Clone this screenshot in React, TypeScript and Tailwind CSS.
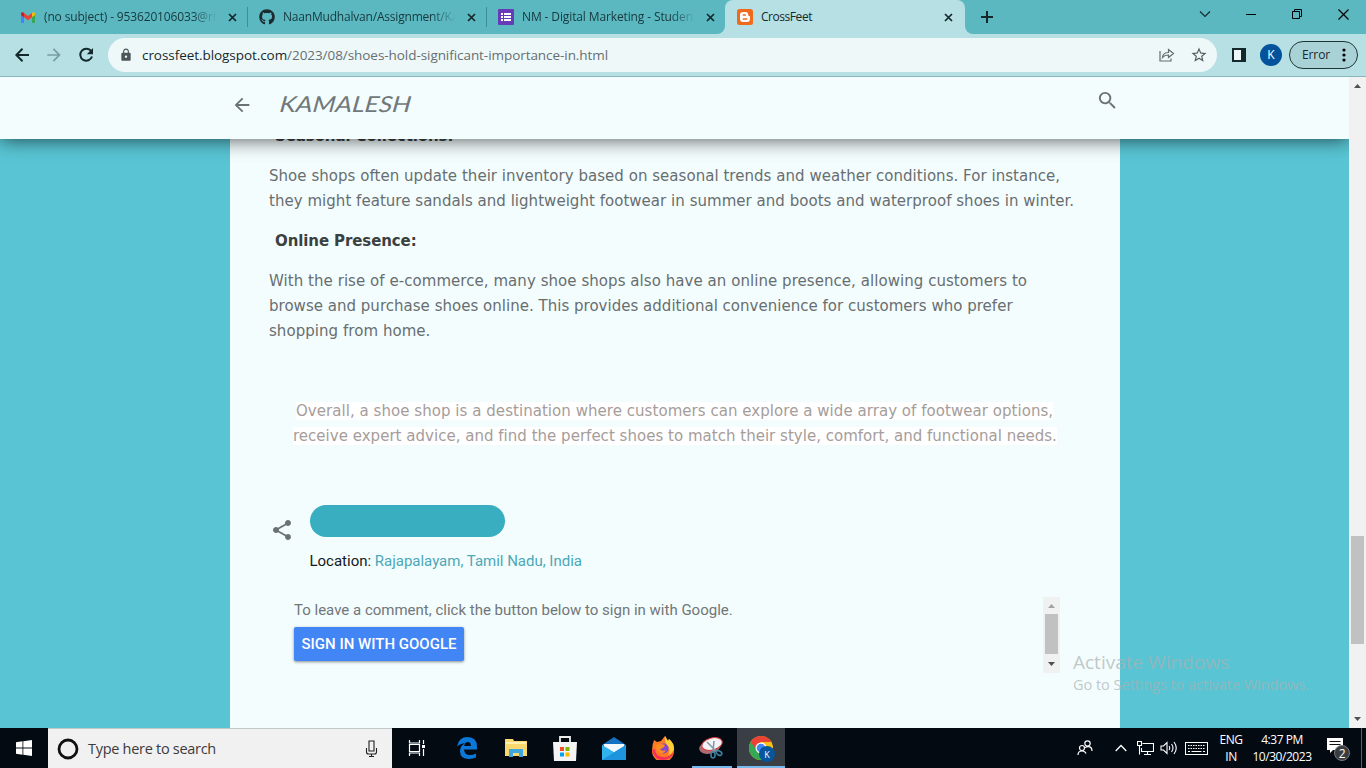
import React from "react";
import { MdArrowBack, MdArrowForward, MdLock, MdStarOutline, MdSearch, MdShare } from "react-icons/md";
import { FaGithub } from "react-icons/fa";

const UI = "font-['Open_Sans','Noto_Sans',sans-serif]";

function Gmail() {
  return (
    <svg width="14" height="11" viewBox="0 0 14 11">
      <path d="M0 1v9q0 1 1 1h2V3z" fill="#4285f4" />
      <path d="M14 1v9q0 1-1 1h-2V3z" fill="#34a853" />
      <path d="M0 1.500V3l3 2.300V1L2 .3Q.3-.2 0 1.500z" fill="#c5221f" />
      <path d="M14 1.500V3l-3 2.300V1l1-.7q1.700-.5 2 1.200z" fill="#fbbc04" />
      <path d="M3 1l4 3 4-3v4.300l-4 3-4-3z" fill="#ea4335" />
    </svg>
  );
}

function FormsIcon() {
  return (
    <svg width="16" height="16" viewBox="0 0 16 16">
      <rect width="16" height="16" rx="1" fill="#673ab7" />
      <path d="M3 4h2v2H3zM3 7h2v2H3zM3 10h2v2H3zM6 4h7v2H6zM6 7h7v2H6zM6 10h7v2H6z" fill="#fff" />
    </svg>
  );
}

function BloggerIcon() {
  return (
    <svg width="16" height="16" viewBox="0 0 16 16">
      <rect width="16" height="16" rx="2.500" fill="#f06a1b" />
      <path d="M6 3h2.500A2.700 2.700 0 0 1 11.200 5.700q0 1.300 1 1.300.8 0 .8.8V10a3 3 0 0 1-3 3H6a3 3 0 0 1-3-3V6a3 3 0 0 1 3-3z" fill="#fff" />
      <path d="M6.200 6h2.200M6.200 10h3.600" stroke="#f06a1b" strokeWidth="1.300" strokeLinecap="round" />
    </svg>
  );
}

function CloseIcon({ className }: { className: string }) {
  return (
    <svg className={`shrink-0 ${className}`} width="9" height="9" viewBox="0 0 9 9">
      <path d="M1 1l7 7M8 1l-7 7" stroke="#14272a" strokeWidth="1.700" />
    </svg>
  );
}

function Tab({ icon, title, width, sep, tracking }: { icon: React.ReactNode; title: string; width: string; sep: boolean; tracking: string }) {
  return (
    <div className={`flex h-[34px] items-center ${width}`}>
      <div className="flex w-[16px] shrink-0 justify-center">{icon}</div>
      <div className={`ml-2 w-[173px] shrink-0 overflow-hidden whitespace-nowrap text-[12px] text-[#16383c] [mask-image:linear-gradient(to_right,black_86%,transparent)] ${tracking}`}>{title}</div>
      <CloseIcon className="ml-[11px]" />
      {sep && <div className="ml-[10px] h-[20px] w-px shrink-0 bg-[#3d8e96]" />}
    </div>
  );
}

function TabStrip() {
  return (
    <div className="flex h-[34px] bg-[#b6e0e3]">
      <div className="flex w-[725px] overflow-hidden rounded-br-[8px] bg-[#5bb8c0] pl-5">
        <Tab icon={<Gmail />} title="(no subject) - 953620106033@rit" width="w-[239px]" sep tracking="tracking-[-0.15px]" />
        <Tab icon={<FaGithub size={16} color="#1c2b30" />} title="NaanMudhalvan/Assignment/Kar" width="w-[239px]" sep tracking="tracking-[-0.2px]" />
        <Tab icon={<FormsIcon />} title="NM - Digital Marketing - Student" width="w-[227px]" sep={false} tracking="tracking-[-0.12px]" />
      </div>
      <div className="w-[240px] bg-[#5bb8c0]">
        <div className="flex h-full items-center rounded-t-[8px] bg-[#b6e0e3] pl-3">
          <BloggerIcon />
          <span className="ml-2 w-[180px] text-[12px] tracking-[-0.45px] text-[#17282b]">CrossFeet</span>
          <CloseIcon className="ml-[3px]" />
        </div>
      </div>
      <div className="flex flex-1 items-center rounded-bl-[8px] bg-[#5bb8c0]">
        <svg className="ml-4" width="12" height="12" viewBox="0 0 12 12"><path d="M6 0v12M0 6h12" stroke="#14272a" strokeWidth="2" /></svg>
        <div className="mb-[6px] ml-auto flex items-center">
          <svg width="12" height="8" viewBox="0 0 12 8"><path d="M1 1.500l5 5 5-5" fill="none" stroke="#17282b" strokeWidth="1.100" /></svg>
          <svg className="ml-[35px]" width="10" height="10" viewBox="0 0 10 10"><path d="M0 5.500h10" stroke="#000" /></svg>
          <svg className="ml-[36px]" width="10" height="10" viewBox="0 0 10 10"><path d="M.5 2.500h7v7h-7zM2.500 2.500v-2h7v7h-2" fill="none" stroke="#000" /></svg>
          <svg className="ml-[36px] mr-[17px]" width="11" height="11" viewBox="0 0 11 11"><path d="M.5.5l10 10M10.500.5l-10 10" stroke="#000" strokeWidth="1.200" /></svg>
        </div>
      </div>
    </div>
  );
}

function Toolbar() {
  return (
    <div className="flex h-[43px] items-center border-b border-[#8ab7bb] bg-[#b6e0e3]">
      <svg className="ml-[15px]" width="14" height="14" viewBox="0 0 14 14"><path d="M14 7H1.500M7.500.8L1.300 7l6.200 6.200" fill="none" stroke="#14272a" strokeWidth="2" /></svg>
      <MdArrowForward size={20} className="ml-[15px] text-[#789da1]" />
      <svg className="ml-[14px]" width="16" height="16" viewBox="0 0 16 16"><path d="M13.200 4.200A6 6 0 1 0 14 9.500" fill="none" stroke="#14272a" strokeWidth="2" /><path d="M15 1v6.200H8.800z" fill="#14272a" /></svg>
      <div className="ml-[14px] flex h-[34px] w-[1109px] items-center rounded-full bg-[#eef8f9] pl-[11px]">
        <MdLock size={14} className="text-[#4c5558]" />
        <div className="ml-[9px] whitespace-nowrap text-[13.500px] tracking-[-0.06px] text-[#666f72]"><span className="text-[#17282b]">crossfeet.blogspot.com</span>/2023/08/shoes-hold-significant-importance-in.html</div>
        <svg className="ml-auto" width="16" height="14" viewBox="0 0 16 14"><path d="M1 3v10h11v-2.500M3.500 9.500Q4 4.500 9.500 4.500V1.500L14.500 5.500 9.500 9.500V7Q5.500 7 3.500 9.500z" fill="none" stroke="#626c6f" strokeWidth="1.200" /></svg>
        <MdStarOutline size={18} className="ml-[15px] mr-[9px] text-[#545e61]" />
      </div>
      <svg className="ml-[15px]" width="14" height="14" viewBox="0 0 14 14"><path d="M1 1h12v12H1z" fill="#eef8f9" stroke="#14272a" strokeWidth="2" /><path d="M9 1h4v12H9z" fill="#14272a" /></svg>
      <div className="ml-[14px] flex h-[22px] w-[22px] items-center justify-center rounded-full bg-[#02539c] text-[12px] text-white">K</div>
      <div className="ml-[7px] flex h-[28px] w-[69px] items-center rounded-full border border-[#1f3437] bg-[#a9d2d6] pl-3 text-[12px] tracking-[-0.1px] text-[#17282b]">
        <span className="w-[26px]">Error</span>
        <svg className="ml-[14px]" width="4" height="14" viewBox="0 0 4 14"><circle cx="2" cy="2" r="1.600" /><circle cx="2" cy="7" r="1.600" /><circle cx="2" cy="12" r="1.600" /></svg>
      </div>
    </div>
  );
}

function PageHeader() {
  return (
    <header className="relative z-10 h-[62px] bg-[#f3fdfe] shadow-[0_0_20px_rgba(0,0,0,0.7)]">
      <div className="flex h-full items-start">
        <MdArrowBack size={22} className="ml-[231px] mt-[17px] text-[#6c7274]" />
        <div className="ml-[27px] mt-[12px] w-[140px] origin-left -skew-x-6 scale-x-[1.2] whitespace-nowrap font-['Lato',sans-serif] text-[22px] italic leading-[30px] text-[#71787a]">KAMALESH</div>
        <MdSearch size={23} className="ml-[676px] mt-[12px] text-[#6c7274]" />
      </div>
    </header>
  );
}

function Line({ children, className }: { children: React.ReactNode; className: string }) {
  return <div className={`h-[25px] whitespace-nowrap leading-[25px] ${className}`}>{children}</div>;
}

function Article() {
  return (
    <main className="ml-[230px] flex h-[589px] w-[890px] flex-col bg-[#f3fdfe] px-[39px]">
      <div className="-mt-[15px] flex flex-col gap-[15px] font-['Verdana','DejaVu_Sans',sans-serif] text-[15px] text-[#686e70]">
        <Line className="pl-1.5 font-bold text-[#3b4041] tracking-[-0.1px]">Seasonal Collections:</Line>
        <div>
          <Line className="tracking-[0.038px]">Shoe shops often update their inventory based on seasonal trends and weather conditions. For instance,</Line>
          <Line className="tracking-[0.034px]">they might feature sandals and lightweight footwear in summer and boots and waterproof shoes in winter.</Line>
        </div>
        <Line className="pl-1.5 font-bold text-[#3b4041] tracking-[-0.1px]">Online Presence:</Line>
        <div>
          <Line className="tracking-[0.052px]">With the rise of e-commerce, many shoe shops also have an online presence, allowing customers to</Line>
          <Line className="tracking-[0.02px]">browse and purchase shoes online. This provides additional convenience for customers who prefer</Line>
          <Line className="tracking-[0.05px]">shopping from home.</Line>
        </div>
        <div className="mt-[40px] text-[#a59d9b]">
          <Line className="pl-[27px] tracking-[0.046px]"><span className="bg-white">Overall, a shoe shop is a destination where customers can explore a wide array of footwear options,</span></Line>
          <Line className="pl-[24px] tracking-[0.02px]"><span className="bg-white">receive expert advice, and find the perfect shoes to match their style, comfort, and functional needs.</span></Line>
        </div>
      </div>
      <div className="mt-[56px] flex font-['Roboto',sans-serif] text-[15px]">
        <MdShare size={24} className="mt-[13px] ml-[1px] text-[#6c7274]" />
        <div className="ml-[16px]">
          <div className="h-[32px] w-[195px] rounded-full bg-[#39aec1]" />
          <div className="-ml-[0.5px] mt-[12px] leading-6 tracking-[-0.01px] text-[#17191a]">Location: <span className="text-[#4ca8b6]">Rajapalayam, Tamil Nadu, India</span></div>
        </div>
      </div>
      <div className="mt-[24px] flex h-[76px] justify-between pl-[25px] pr-[21px] font-['Roboto',sans-serif] text-[15px]">
        <div>
          <div className="h-[30px] leading-[27px] text-[#717678]">To leave a comment, click the button below to sign in with Google.</div>
          <div className="flex h-[34px] w-[170px] items-center justify-center whitespace-nowrap rounded-[2px] bg-[#4285f4] font-medium text-white shadow-[0_1px_3px_rgba(0,0,0,0.45)]">SIGN IN WITH GOOGLE</div>
        </div>
        <div className="flex w-[17px] flex-col items-center justify-between bg-[#f0f1f1]">
          <svg width="17" height="17" viewBox="0 0 17 17"><path d="M5 11l3.500-4 3.500 4z" fill="#a3a3a3" /></svg>
          <div className="mb-[2px] h-[40px] w-[13px] bg-[#c1c1c1]" />
          <svg width="17" height="17" viewBox="0 0 17 17"><path d="M5 6l3.500 4L12 6z" fill="#505050" /></svg>
        </div>
      </div>
    </main>
  );
}

function Taskbar() {
  return (
    <div className="flex h-[40px] bg-[#040a12] text-white">
      <div className="flex w-[48px] items-center justify-center">
        <svg width="16" height="16" viewBox="0 0 16 16"><path d="M0 2.200L6.500 1.300V7.500H0zM7.300 1.200L16 0V7.500H7.300zM0 8.400h6.500v6.300L0 13.800zM7.300 8.400H16V16l-8.700-1.200z" fill="#fff" /></svg>
      </div>
      <div className="flex w-[344px] items-center border-t border-[#bfc9ca] bg-[#f1f1f1]">
        <svg className="ml-[9px]" width="22" height="22" viewBox="0 0 22 22"><circle cx="11" cy="11" r="9" fill="none" stroke="#111" strokeWidth="2.800" /></svg>
        <span className="ml-[9px] w-[277px] whitespace-nowrap text-[14.500px] tracking-[-0.29px] text-[#3b3b3b]">Type here to search</span>
        <svg width="13" height="17" viewBox="0 0 13 17"><path d="M4 1h5v10H4zM1.500 8v4q0 2 2 2h6q2 0 2-2V8M6.500 14v2.500M4 16.500h5" fill="none" stroke="#222" strokeWidth="1.100" /></svg>
      </div>
      <div className="flex flex-1 items-center">
        <svg className="ml-[16px]" width="18" height="18" viewBox="0 0 18 18"><path d="M1.500 1v3h10V1M1.500 17v-3h10v3M1.500 5.500h10v7h-10zM15.500 1v4M15.500 10v7" fill="none" stroke="#fff" strokeWidth="1.200" /><rect x="14" y="6" width="3" height="3" fill="#fff" /></svg>
        <svg className="ml-[31px]" width="20" height="22" viewBox="0 0 20 22"><path d="M0 9.600Q1.500 0 10.500 0 20 0 20 10v2.500H7Q7.500 18 13 18q3 0 6-1.600v4.200Q16 22 12 22 3 22 3 14q0-5.500 5.500-8Q3 6.500 0 9.600zM7.200 9h6.700Q14 5 10.800 5 7.800 5 7.200 9z" fill="#0b78d7" /></svg>
        <svg className="ml-[27px]" width="24" height="20" viewBox="0 0 24 20"><path d="M1 1h8l1 2h13v15H1z" fill="#f9d870" /><path d="M2 4h20v2H2z" fill="#fff0b0" /><path d="M5 19v-8h14v8h-4v-4H9v4z" fill="#41a6dc" /></svg>
        <svg className="ml-[25px]" width="24" height="25" viewBox="0 0 24 25"><path d="M7 7V1h10v6" fill="none" stroke="#eee" strokeWidth="1.800" /><path d="M0 6h24l-1 19H1z" fill="#f4f4f4" /><path d="M7 11h4v4H7z" fill="#f25022" /><path d="M12.500 11h4v4h-4z" fill="#7fba00" /><path d="M7 16.500h4v4H7z" fill="#00a4ef" /><path d="M12.500 16.500h4v4h-4z" fill="#ffb900" /></svg>
        <svg className="ml-[25px]" width="24" height="23" viewBox="0 0 24 23"><path d="M0 8L12 0l12 8v5H0z" fill="#1470c0" /><path d="M2 7h20v9H2z" fill="#f2f8fc" /><path d="M0 8l12 7 12-7v15H0z" fill="#31b3ed" /><path d="M0 23L24 8v15z" fill="#1e94df" /><path d="M1 7.600h22L12 15z" fill="#f2f8fc" /></svg>
        <svg className="ml-[25px]" width="24" height="24" viewBox="0 0 24 24"><path d="M3 4l3 2 4-1 4-5 3 5 1-2q6 5 5 12a11 11 0 0 1-22 0Q1 9 3 4z" fill="#ff7a24" /><path d="M14 0l3 5 1-2q5 4 5 10-2 5-6 6 3-5 0-9-4-4-3-10z" fill="#ffcd36" /><path d="M1 14q2 10 11 10 8 0 11-8-5 6-11 5-8-1-8-8z" fill="#f52f58" /><circle cx="12.500" cy="12.500" r="5" fill="#8149d3" /><path d="M5 9q5-2 9 0-1 3-5 4 2 3 6 1-2 4-6 3-5-2-4-8z" fill="#ff8b23" /></svg>
        <div className="ml-[17px] flex h-full w-[40px] flex-col items-center justify-between border-b-2 border-[#76b9ed] pt-[8px]">
          <svg width="26" height="24" viewBox="0 0 26 24"><ellipse cx="11" cy="11" rx="11" ry="6.500" transform="rotate(-15 11 11)" fill="#ad6d70" /><ellipse cx="13" cy="8" rx="10.500" ry="6" transform="rotate(-15 13 8)" fill="#f3f3f5" stroke="#d23b43" /><path d="M8 6l9 9M15 5l-1 11" stroke="#7e98a8" strokeWidth="1.500" /><g fill="none" stroke="#3e7e9d" strokeWidth="1.600"><ellipse cx="14" cy="19" rx="2" ry="3" /><ellipse cx="20" cy="17" rx="3" ry="2" transform="rotate(30 20 17)" /></g></svg>
        </div>
        <div className="ml-[5px] flex h-full w-[48px] justify-center border-b-2 border-[#76b9ed] bg-[#3a3f46] pl-[2px] pt-[8px]">
          <svg width="26" height="26" viewBox="0 0 26 26"><circle cx="12" cy="12" r="12" fill="#fbc116" /><path d="M12 12L1.600 6A12 12 0 0 0 12 24l5-9z" fill="#34a853" /><path d="M1.600 6A12 12 0 0 1 22.400 6H12L7 13z" fill="#ea4335" /><circle cx="12" cy="12" r="5.500" fill="#fff" /><circle cx="12" cy="12" r="4.300" fill="#4285f4" /><circle cx="18" cy="18" r="8" fill="#07559c" /><text x="15.200" y="21.500" fontSize="9" fill="#fff" fontFamily="Open Sans">K</text></svg>
        </div>
        <svg className="ml-auto" width="16" height="16" viewBox="0 0 16 16"><g fill="none" stroke="#fff" strokeWidth="1.200"><circle cx="10.500" cy="3.500" r="2.700" /><circle cx="5" cy="8" r="2.500" /><path d="M1 15q0-4 4-4 3 0 4 2.500M8 7.500q2-1.200 4-.8 3 .6 3 4.300" /></g></svg>
        <svg className="ml-[22px]" width="12" height="8" viewBox="0 0 12 8"><path d="M.7 7L6 1.500 11.300 7" fill="none" stroke="#fff" strokeWidth="1.300" /></svg>
        <svg className="ml-[10px]" width="17" height="14" viewBox="0 0 17 14"><path d="M5.500 2.500h11v8H4.500V7M7 13.500h7M10.500 10.500v3M.5.500h4v4h-4zM2.500 4.500v9" fill="none" stroke="#fff" strokeWidth="1.100" /></svg>
        <svg className="ml-[6px]" width="18" height="14" viewBox="0 0 18 14"><path d="M1 5h2.500L7 1.500v11L3.500 9H1zM9 5q1.500 2 0 4M11.500 3q3 4 0 8M14 1q4.500 6 0 12" fill="none" stroke="#fff" strokeWidth="1.100" /></svg>
        <svg className="ml-[7px]" width="23" height="13" viewBox="0 0 23 13"><rect x=".5" y=".5" width="22" height="12" fill="none" stroke="#fff" /><path d="M3 3.500h17M3 6.500h17" stroke="#fff" strokeDasharray="1.500 1" /><path d="M3 9.500h2M6.500 9.500h10M18 9.500h2" stroke="#fff" /></svg>
        <div className="ml-[9px] flex w-[28px] flex-col items-center text-[12px] leading-[17px] tracking-[-0.45px]"><span>ENG</span><span>IN</span></div>
        <div className="ml-[6px] flex w-[62px] flex-col items-center whitespace-nowrap text-[12px] leading-[17px] tracking-[-0.45px]"><span>4:37 PM</span><span>10/30/2023</span></div>
        <svg className="ml-[13px]" width="25" height="25" viewBox="0 0 25 25"><path d="M1 2h16v12H7l-3 3v-3H1z" fill="#fff" /><path d="M3.500 5.500h11M3.500 8.500h11" stroke="#111" /><circle cx="16" cy="17" r="7.500" fill="#3a3d40" stroke="#75787b" /><text x="12.700" y="21.500" fontSize="12" fill="#fff" fontFamily="Open Sans">2</text></svg>
        <div className="ml-[10px] h-full w-px bg-[#5c6066]" />
        <div className="w-[4px]" />
      </div>
    </div>
  );
}

export default function App() {
  return (
    <div className={`relative h-[768px] w-[1366px] overflow-hidden bg-[#b6e0e3] ${UI}`}>
      <TabStrip />
      <Toolbar />
      <div className="flex h-[651px]">
        <div className="w-[1349px] overflow-hidden bg-[#59c5d4]">
          <PageHeader />
          <Article />
        </div>
        <div className="flex w-[17px] flex-col items-center bg-[#f1f1f1]">
          <svg width="17" height="17" viewBox="0 0 17 17"><path d="M5 11l3.500-4 3.500 4z" fill="#505050" /></svg>
          <div className="mt-[442px] h-[108px] w-[13px] bg-[#c1c1c1]" />
          <svg className="mt-auto" width="17" height="17" viewBox="0 0 17 17"><path d="M5 6l3.500 4L12 6z" fill="#505050" /></svg>
        </div>
      </div>
      <Taskbar />
      <div className="absolute left-[1073px] top-[650px] whitespace-nowrap text-[#a9b0b1]/70">
        <div className="text-[19px] leading-[24px] tracking-[0px]">Activate Windows</div>
        <div className="text-[14.500px] leading-[22px] tracking-[-0.05px]">Go to Settings to activate Windows.</div>
      </div>
    </div>
  );
}
